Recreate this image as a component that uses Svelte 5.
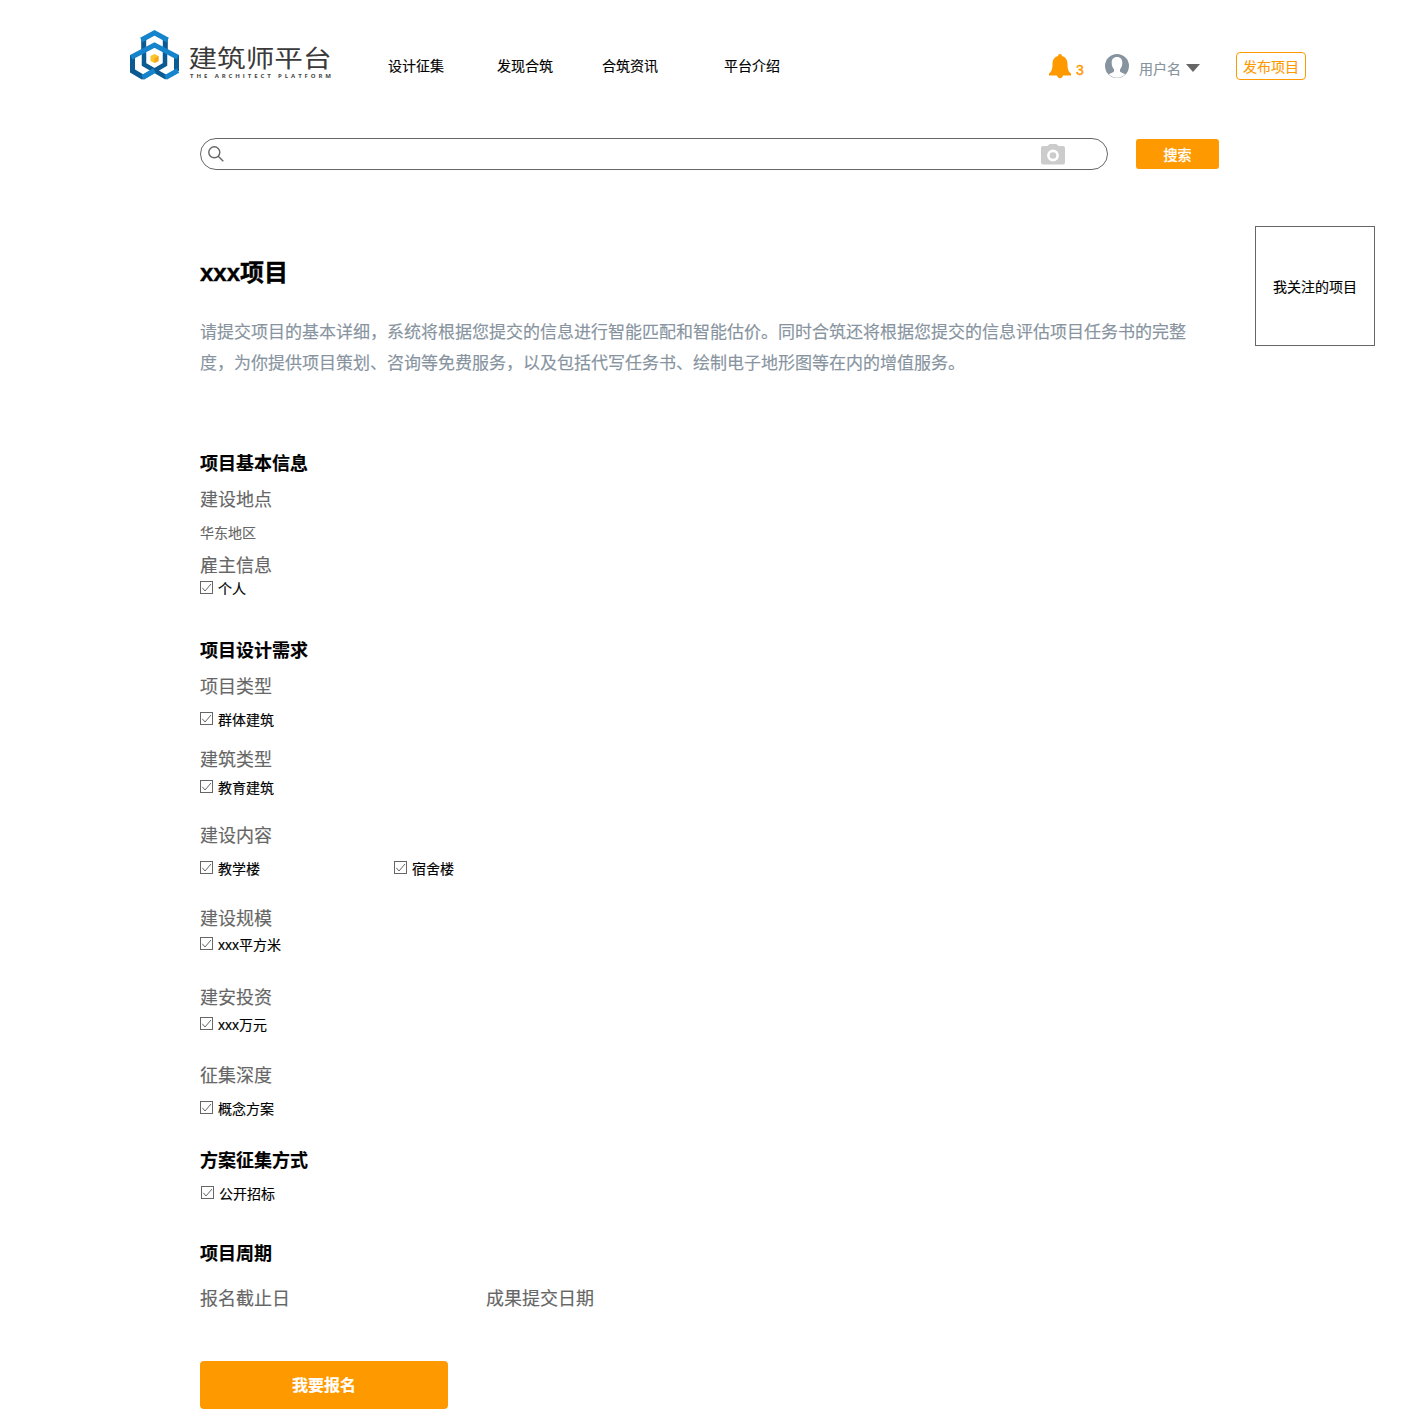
<script>
  const nav = [
    { id: 'collect', text: '设计征集' },
    { id: 'discover', text: '发现合筑' },
    { id: 'news', text: '合筑资讯' },
    { id: 'about', text: '平台介绍' }
  ];
  const design = [
    { id: 'kind', label: '项目类型', options: ['群体建筑'] },
    { id: 'building', label: '建筑类型', options: ['教育建筑'] },
    { id: 'content', label: '建设内容', options: ['教学楼', '宿舍楼'] },
    { id: 'scale', label: '建设规模', options: ['xxx平方米'] },
    { id: 'budget', label: '建安投资', options: ['xxx万元'] },
    { id: 'depth', label: '征集深度', options: ['概念方案'] }
  ];
</script>

{#snippet option(text)}
  <div class="option">
    <svg class="check" viewBox="0 0 13 13" width="13" height="13">
      <rect x="0.5" y="0.5" width="12" height="12" />
      <path d="M2.3 6.8 5 10 11 3" />
    </svg>
    <span>{text}</span>
  </div>
{/snippet}

<div class="page">
  <header>
    <svg class="logo" width="202" height="52" viewBox="0 0 202 52">
      <g fill="none" stroke-width="5">
        <path stroke="#0b5a92" d="M13.700 8V24M35.300 8V24" />
        <path stroke="#0b5a92" stroke-width="4.500" d="M14 24V34.500L36.500 47.500M35 24V34.500L12.500 47.500" />
        <path stroke="#1584cc" d="M11.300 10 24.500 2.900 37.700 10" />
        <path stroke="#0b5a92" d="M2.500 25V41L13.500 47.500M46.500 25V41" />
        <path stroke="#1584cc" d="M12.500 47.500 24.500 40.500M35.500 47.500 48 40.500" />
        <path stroke="#1584cc" d="M1.200 27.200 24.500 15 47.800 27.200" />
      </g>
      <path fill="#fcc52c" d="M24.500 24 28.500 26V31L24.500 33 20.500 31V26Z" />
      <path fill="#f3a51b" d="M24.500 28.500 28.500 26V31L24.500 33Z" />
      <text class="brand" transform="translate(58.500 36.500) scale(1 .87)" textLength="143" lengthAdjust="spacingAndGlyphs">建筑师平台</text>
      <text class="tagline" x="60" y="48" textLength="141">THE ARCHITECT PLATFORM</text>
    </svg>
    <nav>
      {#each nav as item}
        <span class={item.id}>{item.text}</span>
      {/each}
    </nav>
    <div class="notice">
      <svg width="24" height="26" viewBox="0 0 24 26">
        <path fill="#ff9900" d="M12 0C13.200 0 13.900.8 13.900 2 17.800 3 19.500 6 19.500 10 19.500 15.500 20.500 17.500 23 19.500V21.500H15C14.500 23.300 13.500 24.300 12 24.300S9.500 23.300 9 21.500H1V19.500C3.500 17.500 4.500 15.500 4.500 10 4.500 6 6.200 3 10.100 2 10.100.8 10.800 0 12 0Z" />
      </svg>
      <span>3</span>
    </div>
    <div class="user">
      <svg width="24" height="24" viewBox="0 0 24 24">
        <circle cx="12" cy="12" r="12" fill="#8794a0" />
        <path fill="#fff" d="M12 3C15.800 3 17.500 5.600 17.300 9.200 17.200 12 16.200 14 15 15.300V17.600C16 19 18.500 19 20.200 20.200A11.400 11.400 0 0 1 3.800 20.200C5.500 19 8 19 9 17.600V15.300C7.800 14 6.800 12 6.700 9.200 6.500 5.600 8.200 3 12 3Z" />
      </svg>
      <span>用户名</span>
      <svg class="caret" width="14" height="8" viewBox="0 0 14 8"><path fill="#666" d="M0 0H14L7 8Z" /></svg>
    </div>
    <button class="publish">发布项目</button>
  </header>

  <div class="search">
    <div class="field">
      <svg width="16" height="16" viewBox="0 0 16 16" fill="none" stroke="#666" stroke-width="1.4">
        <circle cx="6.300" cy="6.300" r="5.500" />
        <path d="M10.200 10.200 15.300 15.300" />
      </svg>
      <svg width="24" height="21" viewBox="0 0 24 21">
        <path fill="#ccc" d="M2 2H6.500L8 0.600Q8.500 0 9.500 0H14.500Q15.500 0 16 0.600L17.500 2H22Q24 2 24 4V18.500Q24 20.500 22 20.500H2Q0 20.500 0 18.500V4Q0 2 2 2Z" />
        <circle cx="12" cy="11.500" r="4.600" fill="none" stroke="#fff" stroke-width="2.600" />
      </svg>
    </div>
    <button>搜索</button>
  </div>

  <div class="body">
    <main>
      <h1>xxx项目</h1>
      <p class="intro">请提交项目的基本详细，系统将根据您提交的信息进行智能匹配和智能估价。同时合筑还将根据您提交的信息评估项目任务书的完整度，为你提供项目策划、咨询等免费服务，以及包括代写任务书、绘制电子地形图等在内的增值服务。</p>

      <section class="basics">
        <h2>项目基本信息</h2>
        <div class="group place">
          <h3>建设地点</h3>
          <div class="value">华东地区</div>
        </div>
        <div class="group owner">
          <h3>雇主信息</h3>
          {@render option('个人')}
        </div>
      </section>

      <section class="design">
        <h2>项目设计需求</h2>
        {#each design as group}
          <div class="group {group.id}">
            <h3>{group.label}</h3>
            <div class="options">
              {#each group.options as text}
                {@render option(text)}
              {/each}
            </div>
          </div>
        {/each}
      </section>

      <section class="method">
        <h2>方案征集方式</h2>
        {@render option('公开招标')}
      </section>

      <section class="period">
        <h2>项目周期</h2>
        <div class="dates">
          <h3>报名截止日</h3>
          <h3>成果提交日期</h3>
        </div>
      </section>

      <button class="apply">我要报名</button>
    </main>
    <aside>我关注的项目</aside>
  </div>
</div>

<style>
  :global(body) {
    margin: 0;
    background: #fff;
  }
  .page {
    width: 1420px;
    height: 1409px;
    overflow: hidden;
    color: #000;
    font: 14px/18px "Liberation Sans", "Noto Sans CJK SC", sans-serif;
    -webkit-text-stroke-width: 0.15px;
  }
  * {
    box-sizing: border-box;
  }
  h1, h2, h3, p {
    margin: 0;
  }
  button {
    padding: 2px 0 0;
    border: 0;
    font: inherit;
    color: #fff;
    background: #ff9900;
  }
  header {
    display: flex;
    align-items: flex-start;
    height: 138px;
    padding: 30px 0 0 130px;
  }
  svg {
    display: block;
    flex: none;
  }
  .brand {
    font: 400 27px "Noto Sans CJK SC", sans-serif;
    fill: #3a3a3a;
  }
  .tagline {
    font: bold 6px "Open Sans", sans-serif;
    fill: #444;
  }
  nav {
    display: flex;
    width: 660px;
    padding: 27px 0 0 56px;
  }
  .discover {
    margin-left: 53px;
  }
  .news {
    margin-left: 49px;
  }
  .about {
    margin-left: 66px;
  }
  .notice {
    display: flex;
    width: 57px;
    margin: 24px 0 0 56px;
    color: #ff9900;
  }
  .notice span {
    padding: 7px 0 0 4px;
    -webkit-text-stroke-width: 0.4px;
  }
  .user {
    display: flex;
    width: 131px;
    padding-top: 24px;
    color: #8794a0;
  }
  .user span {
    margin: 6px 5px 0 10px;
  }
  .caret {
    margin-top: 10px;
  }
  .publish {
    width: 70px;
    height: 28px;
    margin-top: 22px;
    border: 1px solid #ff9900;
    border-radius: 4px;
    color: #ff9900;
    background: #fff;
  }
  .search {
    display: flex;
    align-items: center;
    gap: 28px;
    height: 32px;
    padding-left: 200px;
  }
  .field {
    display: flex;
    align-items: center;
    justify-content: space-between;
    width: 908px;
    height: 32px;
    padding: 0 42px 0 7px;
    border: 1px solid #666;
    border-radius: 16px;
  }
  .search button {
    width: 83px;
    height: 30px;
    border-radius: 3px;
    -webkit-text-stroke-width: 0.4px;
  }
  .body {
    display: flex;
    gap: 55px;
    padding: 56px 0 0 200px;
  }
  main {
    width: 1000px;
    padding-top: 32px;
  }
  aside {
    width: 120px;
    height: 120px;
    border: 1px solid #666;
    line-height: 120px;
    text-align: center;
  }
  h1 {
    font-size: 24px;
    line-height: 30px;
    -webkit-text-stroke-width: 0.4px;
  }
  .intro {
    margin-top: 29px;
    color: #8794a0;
    font-size: 17px;
    line-height: 31px;
  }
  .basics {
    margin-top: 73px;
  }
  h2 {
    font-size: 18px;
    line-height: 24px;
  }
  h3 {
    color: #666;
    font-size: 18px;
    font-weight: 400;
    line-height: 24px;
  }
  section,
  .group {
    display: flex;
    flex-direction: column;
    gap: 12px;
  }
  .value {
    color: #666;
  }
  .option {
    display: flex;
    gap: 5px;
    height: 18px;
    width: 194px;
  }
  .options {
    display: flex;
  }
  .check {
    margin-top: 1px;
    fill: none;
    stroke: #666;
    stroke-width: 1;
  }
  .owner {
    gap: 2px;
  }
  .design {
    gap: 0;
    margin-top: 41px;
  }
  .kind {
    margin-top: 12px;
  }
  .building {
    gap: 7px;
    margin-top: 19px;
  }
  .content {
    margin-top: 27px;
  }
  .scale {
    gap: 5px;
    margin-top: 29px;
  }
  .budget {
    gap: 6px;
    margin-top: 32px;
  }
  .depth {
    margin-top: 30px;
  }
  .method {
    margin-top: 31px;
  }
  .method .option {
    margin-left: 1px;
  }
  .period {
    gap: 21px;
    margin-top: 39px;
  }
  .dates {
    display: grid;
    grid-template-columns: 286px auto;
  }
  .apply {
    display: block;
    width: 248px;
    height: 48px;
    margin-top: 50px;
    border-radius: 4px;
    font-size: 16px;
    font-weight: bold;
  }
</style>
